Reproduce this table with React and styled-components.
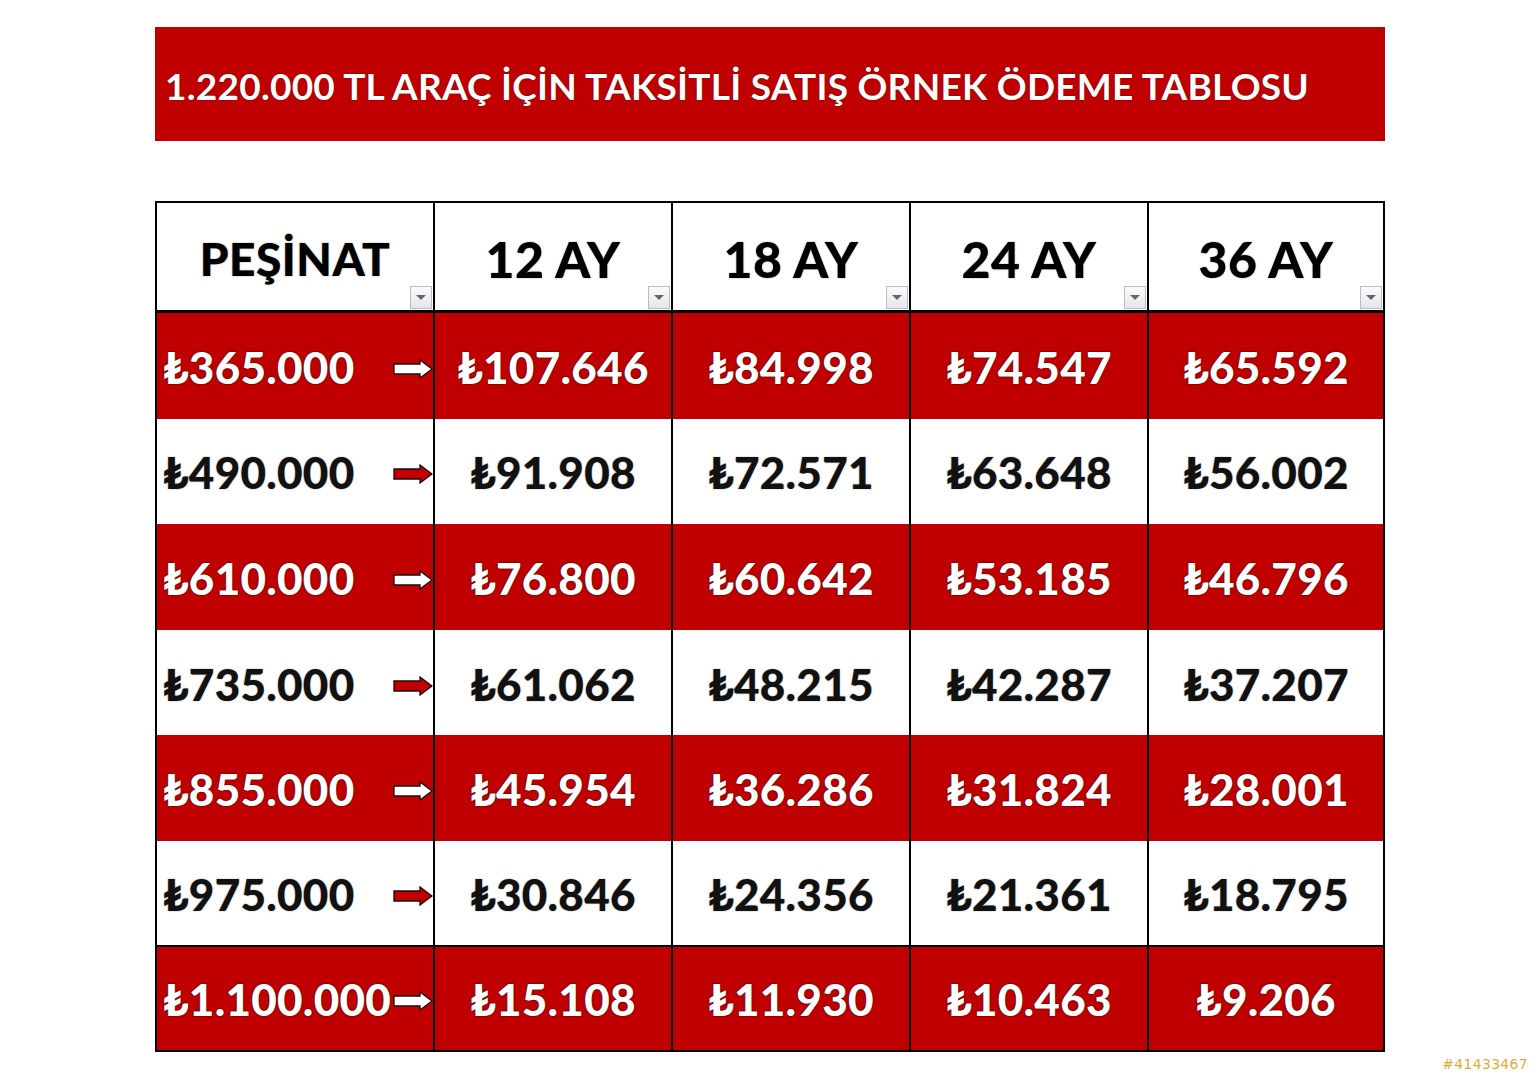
import React from "react";
import styled, { createGlobalStyle } from "styled-components";

const RED = "#c00000";
const FONT = `Lato, "Noto Sans", "DejaVu Sans", sans-serif`;

const Global = createGlobalStyle`
  html, body { margin: 0; padding: 0; background: #fff; }
  body { width: 1538px; height: 1080px; overflow: hidden; font-family: ${FONT}; }
`;

const Page = styled.div`
  position: relative;
  width: 1538px;
  height: 1080px;
  padding: 27px 0 0 155px;
  box-sizing: border-box;
  display: flex;
  flex-direction: column;
  gap: 60px;
`;

const TitleBar = styled.div`
  width: 1230px;
  height: 114px;
  box-sizing: border-box;
  background: ${RED};
  display: flex;
  align-items: center;
  padding: 2px 0 0 10px;
  color: #fff;
  font-family: ${FONT};
  font-weight: 700;
  font-size: 37px;
  letter-spacing: 0.25px;
  white-space: nowrap;
  text-shadow: 0 0 2px rgba(90, 0, 0, 0.8);
`;

const Grid = styled.div`
  width: 1230px;
  box-sizing: border-box;
  border: 2px solid #000;
  display: grid;
  grid-template-columns: 276px 238px 238px 238px 236px;
  grid-template-rows: 110px repeat(5, 105.6px) 104px 105px;
`;

const HeadCell = styled.div`
  position: relative;
  background: #fff;
  border-left: ${(p) => (p.$first ? "none" : "2px solid #000")};
  border-bottom: 3px solid #000;
  display: flex;
  align-items: center;
  justify-content: center;
  padding-top: 4px;
  box-sizing: border-box;
  font-family: ${FONT};
  font-weight: 900;
  font-size: ${(p) => (p.$first ? "46px" : "50px")};
  color: #000;
  text-shadow: 0 0 1.5px rgba(0, 0, 0, 0.5);
  letter-spacing: 0.5px;
`;

const Drop = styled.div`
  position: absolute;
  right: 1px;
  bottom: 1px;
  width: 22px;
  height: 23px;
  box-sizing: border-box;
  border: 1px solid #b9bcc2;
  background: linear-gradient(#fbfbfc, #e4e6ea);
  display: flex;
  align-items: center;
  justify-content: center;
  &::after {
    content: "";
    border-left: 5px solid transparent;
    border-right: 5px solid transparent;
    border-top: 5px solid #666;
  }
`;

const Cell = styled.div`
  background: ${(p) => (p.$red ? RED : "#fff")};
  color: ${(p) => (p.$red ? "#fff" : "#111")};
  border-left: ${(p) => (p.$first ? "none" : "2px solid #000")};
  border-top: ${(p) => (p.$sep ? "2px solid #000" : "none")};
  box-sizing: border-box;
  display: flex;
  align-items: center;
  justify-content: ${(p) => (p.$first ? "space-between" : "center")};
  padding: ${(p) => (p.$first ? "2px 0 0 6px" : "2px 0 0 0")};
  font-family: ${FONT};
  font-weight: 900;
  font-size: 44px;
  letter-spacing: 0.3px;
  text-shadow: ${(p) =>
    p.$red
      ? "0 0 2px rgba(60,0,0,0.9), 0 0 1px rgba(60,0,0,0.9)"
      : "0 0 1.5px rgba(0,0,0,0.45)"};
  white-space: nowrap;
`;

const ArrowWrap = styled.span`
  display: flex;
  align-items: center;
  margin-top: 4px;
`;

const Watermark = styled.div`
  position: absolute;
  right: 10px;
  bottom: 8px;
  font-family: "DejaVu Sans", sans-serif;
  font-size: 14px;
  color: #e9a83a;
  letter-spacing: 0.3px;
`;

function Arrow({ red }) {
  return (
    <ArrowWrap>
      <svg width="40" height="20" viewBox="0 0 40 20">
        <path
          d="M1 5 H27 V1 L39 10 L27 19 V15 H1 Z"
          fill={red ? "#fff" : RED}
          stroke="#1a0a0a"
          strokeWidth="1.3"
          strokeLinejoin="miter"
        />
      </svg>
    </ArrowWrap>
  );
}

const headers = ["PEŞİNAT", "12 AY", "18 AY", "24 AY", "36 AY"];
const rows = [
  ["₺365.000", "₺107.646", "₺84.998", "₺74.547", "₺65.592"],
  ["₺490.000", "₺91.908", "₺72.571", "₺63.648", "₺56.002"],
  ["₺610.000", "₺76.800", "₺60.642", "₺53.185", "₺46.796"],
  ["₺735.000", "₺61.062", "₺48.215", "₺42.287", "₺37.207"],
  ["₺855.000", "₺45.954", "₺36.286", "₺31.824", "₺28.001"],
  ["₺975.000", "₺30.846", "₺24.356", "₺21.361", "₺18.795"],
  ["₺1.100.000", "₺15.108", "₺11.930", "₺10.463", "₺9.206"],
];

export default function App() {
  return (
    <>
      <Global />
      <Page>
        <TitleBar>1.220.000 TL ARAÇ İÇİN TAKSİTLİ SATIŞ ÖRNEK ÖDEME TABLOSU</TitleBar>
        <Grid>
          {headers.map((h, i) => (
            <HeadCell key={h} $first={i === 0}>
              {h}
              <Drop />
            </HeadCell>
          ))}
          {rows.map((r, ri) => {
            const red = ri % 2 === 0;
            const sep = ri === rows.length - 1;
            return r.map((v, ci) => (
              <Cell key={ri + "-" + ci} $red={red} $first={ci === 0} $sep={sep}>
                <span>{v}</span>
                {ci === 0 && <Arrow red={red} />}
              </Cell>
            ));
          })}
        </Grid>
        <Watermark>#41433467</Watermark>
      </Page>
    </>
  );
}
